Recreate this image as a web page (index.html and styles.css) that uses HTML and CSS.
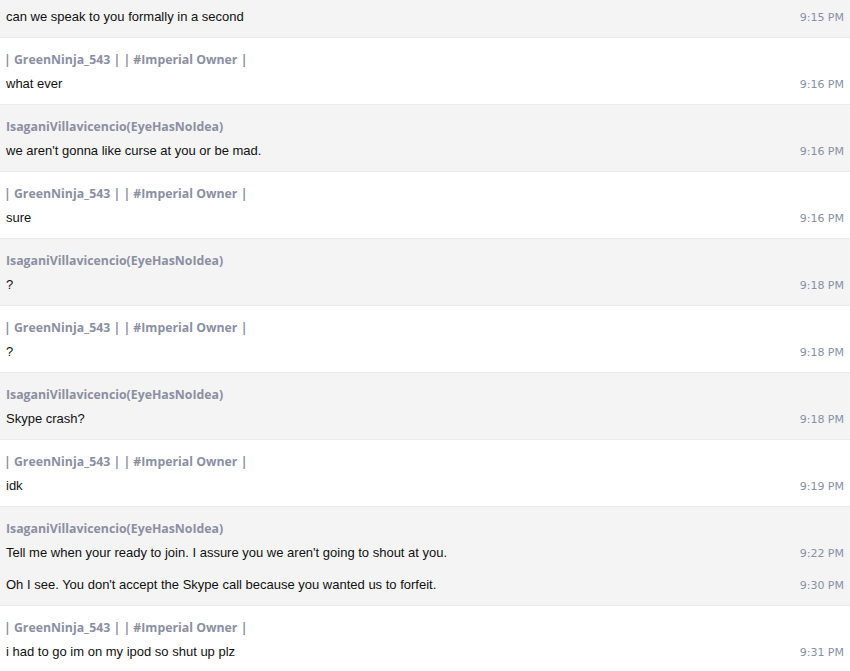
FILE: index.html
```html
<!DOCTYPE html>
<html>
<head>
<meta charset="utf-8">
<link rel="stylesheet" href="styles.css">
</head>
<body>
<div class="chat">
  <div class="block gray first">
    <div class="msg"><span class="text">can we speak to you formally in a second</span><span class="time">9:15 PM</span></div>
  </div>
  <div class="block">
    <div class="name pipe">| GreenNinja_543 | | #Imperial Owner |</div>
    <div class="msg"><span class="text">what ever</span><span class="time">9:16 PM</span></div>
  </div>
  <div class="block gray">
    <div class="name">IsaganiVillavicencio(EyeHasNoIdea)</div>
    <div class="msg"><span class="text">we aren't gonna like curse at you or be mad.</span><span class="time">9:16 PM</span></div>
  </div>
  <div class="block">
    <div class="name pipe">| GreenNinja_543 | | #Imperial Owner |</div>
    <div class="msg"><span class="text">sure</span><span class="time">9:16 PM</span></div>
  </div>
  <div class="block gray">
    <div class="name">IsaganiVillavicencio(EyeHasNoIdea)</div>
    <div class="msg"><span class="text">?</span><span class="time">9:18 PM</span></div>
  </div>
  <div class="block">
    <div class="name pipe">| GreenNinja_543 | | #Imperial Owner |</div>
    <div class="msg"><span class="text">?</span><span class="time">9:18 PM</span></div>
  </div>
  <div class="block gray">
    <div class="name">IsaganiVillavicencio(EyeHasNoIdea)</div>
    <div class="msg"><span class="text">Skype crash?</span><span class="time">9:18 PM</span></div>
  </div>
  <div class="block">
    <div class="name pipe">| GreenNinja_543 | | #Imperial Owner |</div>
    <div class="msg"><span class="text">idk</span><span class="time">9:19 PM</span></div>
  </div>
  <div class="block gray">
    <div class="name">IsaganiVillavicencio(EyeHasNoIdea)</div>
    <div class="msg"><span class="text">Tell me when your ready to join. I assure you we aren't going to shout at you.</span><span class="time">9:22 PM</span></div>
    <div class="msg"><span class="text">Oh I see. You don't accept the Skype call because you wanted us to forfeit.</span><span class="time">9:30 PM</span></div>
  </div>
  <div class="block">
    <div class="name pipe">| GreenNinja_543 | | #Imperial Owner |</div>
    <div class="msg"><span class="text">i had to go im on my ipod so shut up plz</span><span class="time">9:31 PM</span></div>
  </div>
</div>
</body>
</html>
```
FILE: styles.css
```css
html, body {
  margin: 0;
  padding: 0;
  background: #ffffff;
}
.chat {
  width: 850px;
  overflow: hidden;
}
.block {
  display: flex;
  flex-direction: column;
  gap: 8px;
  padding: 14px 6px 12px 6px;
  background: #ffffff;
  border-bottom: 1px solid #ebebeb;
}
.block.gray {
  background: #f4f4f4;
}
.block.first {
  padding-top: 9px;
}
.block .msg + .msg {
  margin-top: 8px;
}
.name {
  height: 16px;
  font-family: "Open Sans", "DejaVu Sans", sans-serif;
  font-weight: 700;
  font-size: 12.3px;
  line-height: 16px;
  color: #8b8fa2;
  white-space: nowrap;
}
.name.pipe {
  margin-left: -2px;
}
.msg {
  display: flex;
  align-items: center;
  justify-content: space-between;
  height: 16px;
  line-height: 16px;
}
.text {
  font-family: "Liberation Sans", Arial, sans-serif;
  font-size: 13px;
  color: #111111;
}
.time {
  font-family: "DejaVu Sans", sans-serif;
  font-size: 11px;
  color: #8790a6;
  position: relative;
  top: 1px;
}
```
